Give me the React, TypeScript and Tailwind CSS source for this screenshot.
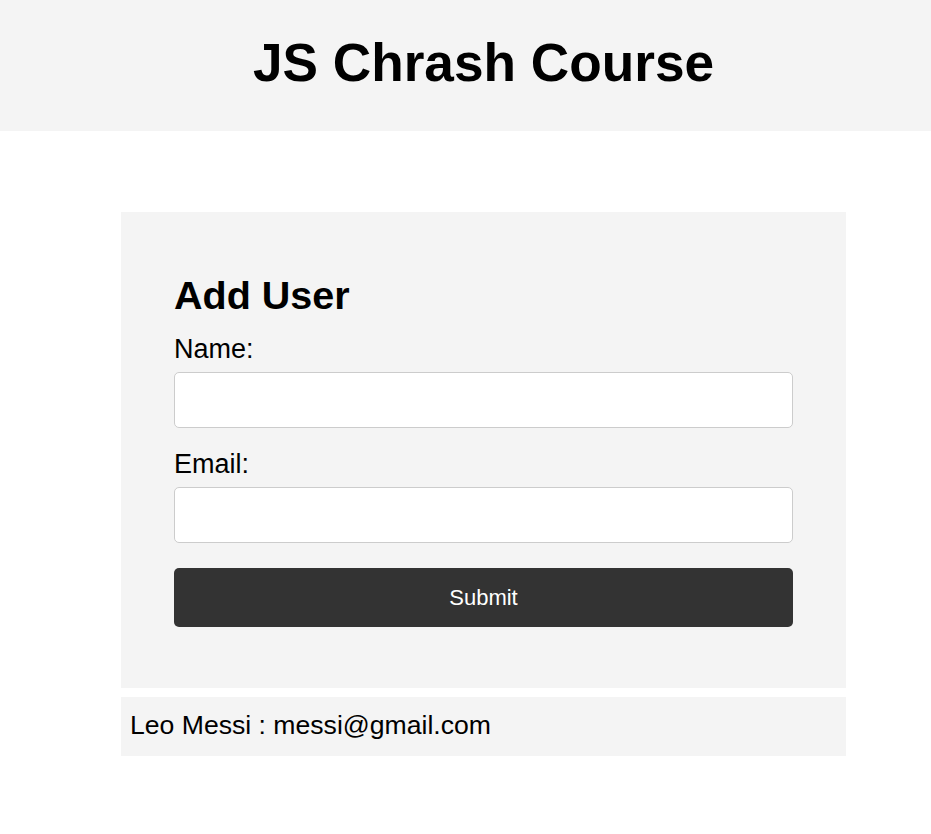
const App = () => {
  return (
    <div className="min-h-screen bg-white text-black font-['Liberation_Sans',Arial,sans-serif]">
      <header className="h-[131px] bg-[#f4f4f4] flex items-center justify-center pl-[36px] pb-[6px]">
        <h1 className="text-[53.2px] font-bold leading-none">JS Chrash Course</h1>
      </header>

      <div className="ml-[121px] w-[725px] mt-[81px]">
        <form className="bg-[#f4f4f4] pt-[64px] px-[53px] pb-[61px]">
          <h2 className="text-[39.5px] font-bold leading-none h-[39px]">Add User</h2>
          <label className="block mt-[21px] text-[27px] leading-none">Name:</label>
          <input
            type="text"
            className="block w-full mt-[9px] h-[56px] bg-white border border-[#cccccc] rounded-[5px] px-2"
          />
          <label className="block mt-[23px] text-[27px] leading-none">Email:</label>
          <input
            type="email"
            className="block w-full mt-[9px] h-[56px] bg-white border border-[#cccccc] rounded-[5px] px-2"
          />
          <button
            type="button"
            className="block w-full mt-[25px] h-[59px] bg-[#333333] text-white text-[22px] rounded-[5px]"
          >
            Submit
          </button>
        </form>

        <ul className="mt-[9px]">
          <li className="h-[59px] bg-[#f4f4f4] pl-[9px] pt-[15px] text-[26.6px] leading-none">
            Leo Messi : messi@gmail.com
          </li>
        </ul>
      </div>
    </div>
  );
};

export default App;
